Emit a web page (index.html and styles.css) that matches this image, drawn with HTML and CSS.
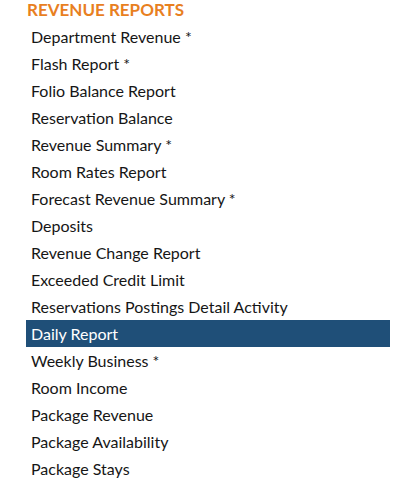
FILE: index.html
```html
<!DOCTYPE html>
<html>
<head>
<meta charset="utf-8">
<link rel="stylesheet" href="styles.css">
</head>
<body>
<div class="panel">
  <h2 class="title">REVENUE REPORTS</h2>
  <ul class="list">
    <li class="item">Department Revenue *</li>
    <li class="item">Flash Report *</li>
    <li class="item">Folio Balance Report</li>
    <li class="item">Reservation Balance</li>
    <li class="item">Revenue Summary *</li>
    <li class="item">Room Rates Report</li>
    <li class="item">Forecast Revenue Summary *</li>
    <li class="item">Deposits</li>
    <li class="item">Revenue Change Report</li>
    <li class="item">Exceeded Credit Limit</li>
    <li class="item">Reservations Postings Detail Activity</li>
    <li class="item active">Daily Report</li>
    <li class="item">Weekly Business *</li>
    <li class="item">Room Income</li>
    <li class="item">Package Revenue</li>
    <li class="item">Package Availability</li>
    <li class="item">Package Stays</li>
  </ul>
</div>
</body>
</html>
```
FILE: styles.css
```css
html, body {
  margin: 0;
  padding: 0;
  background: #fff;
}
body {
  font-family: Lato, "Open Sans", sans-serif;
  color: #161616;
}
.panel {
  padding: 0 12px 0 26px;
}
.title {
  margin: 0;
  padding-left: 1px;
  height: 23px;
  font-size: 17px;
  line-height: 20px;
  font-weight: 700;
  color: #e8801f;
}
.list {
  list-style: none;
  margin: 0;
  padding: 0;
  width: 364px;
}
.item {
  height: 27px;
  line-height: 27px;
  padding-left: 5px;
  font-size: 16px;
}
.item.active {
  background: #1f4f78;
  color: #fff;
}
```
